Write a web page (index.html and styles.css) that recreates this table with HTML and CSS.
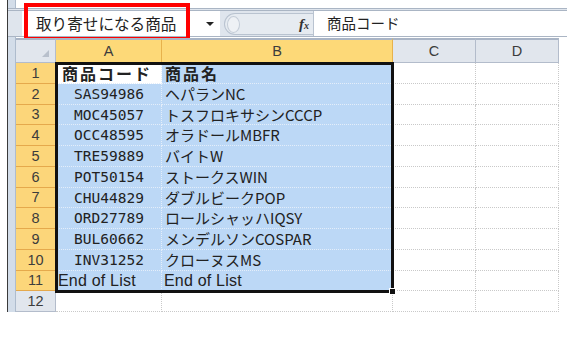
FILE: index.html
```html
<!DOCTYPE html>
<html lang="ja">
<head>
    <meta charset="UTF-8">
    <title>取り寄せになる商品</title>
    <link rel="stylesheet" href="styles.css">
</head>
<body>

    <div class="excel">
        <!-- 数式バー -->
        <div class="formula-bar">
            <div class="name-box">
                <span class="name-text">取り寄せになる商品</span>
                <span class="name-drop"></span>
            </div>
            <div class="fx-pill">
                <span class="pill-dot"></span>
                <span class="fx">f<small>x</small></span>
            </div>
            <div class="formula-input">商品コード</div>
        </div>

        <!-- 名前ボックスの強調枠 -->
        <div class="name-mark"></div>

        <!-- シート -->
        <div class="sheet">
            <div class="corner"></div>
            <div class="col-head on">A</div>
            <div class="col-head on">B</div>
            <div class="col-head">C</div>
            <div class="col-head">D</div>

            <div class="row-head on">1</div>
            <div class="cell active title">商品コード</div>
            <div class="cell sel title name">商品名</div>
            <div class="cell"></div><div class="cell"></div>

            <div class="row-head on">2</div>
            <div class="cell sel code">SAS94986</div>
            <div class="cell sel name">ヘパランNC</div>
            <div class="cell"></div><div class="cell"></div>

            <div class="row-head on">3</div>
            <div class="cell sel code">MOC45057</div>
            <div class="cell sel name">トスフロキサシンCCCP</div>
            <div class="cell"></div><div class="cell"></div>

            <div class="row-head on">4</div>
            <div class="cell sel code">OCC48595</div>
            <div class="cell sel name">オラドールMBFR</div>
            <div class="cell"></div><div class="cell"></div>

            <div class="row-head on">5</div>
            <div class="cell sel code">TRE59889</div>
            <div class="cell sel name">バイトW</div>
            <div class="cell"></div><div class="cell"></div>

            <div class="row-head on">6</div>
            <div class="cell sel code">POT50154</div>
            <div class="cell sel name">ストークスWIN</div>
            <div class="cell"></div><div class="cell"></div>

            <div class="row-head on">7</div>
            <div class="cell sel code">CHU44829</div>
            <div class="cell sel name">ダブルビークPOP</div>
            <div class="cell"></div><div class="cell"></div>

            <div class="row-head on">8</div>
            <div class="cell sel code">ORD27789</div>
            <div class="cell sel name">ロールシャッハIQSY</div>
            <div class="cell"></div><div class="cell"></div>

            <div class="row-head on">9</div>
            <div class="cell sel code">BUL60662</div>
            <div class="cell sel name">メンデルソンCOSPAR</div>
            <div class="cell"></div><div class="cell"></div>

            <div class="row-head on">10</div>
            <div class="cell sel code">INV31252</div>
            <div class="cell sel name">クローヌスMS</div>
            <div class="cell"></div><div class="cell"></div>

            <div class="row-head on">11</div>
            <div class="cell sel end">End of List</div>
            <div class="cell sel end">End of List</div>
            <div class="cell"></div><div class="cell"></div>

            <div class="row-head">12</div>
            <div class="cell"></div><div class="cell"></div>
            <div class="cell"></div><div class="cell"></div>

            <!-- 選択範囲 A1:B11 の太枠 -->
            <div class="sel-frame"></div>
        </div>
    </div>

</body>
</html>
```

FILE: styles.css
```css
body {
    margin: 0;
    background-color: #fff;
    font-family: "Noto Sans CJK JP", sans-serif;
    color: #222;
}
.excel {
    position: relative;
    width: 551px;
    margin-left: 7px;
    padding-left: 8px;
    border-left: 1px solid #3a3a3a;
    background: linear-gradient(to right, #d3dde9 0, #d3dde9 7px, #aebccd 7px, #aebccd 8px, transparent 8px);
    padding-top: 8px;
}

/* 数式バー */
.formula-bar {
    display: flex;
    height: 25px;
    border-top: 3px double #aab5c4;
    border-bottom: 1px solid #aab5c4;
    background-color: #dfe5ed;
    margin-left: -8px;
    padding-left: 14px;
}
.name-box {
    display: flex;
    align-items: center;
    width: 184px;
    background-color: #fff;
    padding-left: 14px;
}
.name-text {
    font-size: 15.6px;
    flex: 1;
    margin-top: -1px;
}
.name-drop {
    width: 0;
    height: 0;
    border-left: 4px solid transparent;
    border-right: 4px solid transparent;
    border-top: 4px solid #222;
    margin-right: 6px;
}
.fx-pill {
    display: flex;
    align-items: center;
    justify-content: space-between;
    width: 82px;
    margin: 2px 0 1px 4px;
    border: 1px solid #b9c3d0;
    border-right: none;
    border-radius: 12px 0 0 12px;
    background-color: #e6ebf1;
    padding: 0 4px 0 2px;
}
.pill-dot {
    width: 11px;
    height: 15px;
    border-radius: 50%;
    border: 1px solid #c4ccd7;
    background-color: #eef1f5;
}
.fx {
    font-family: "Liberation Serif", serif;
    font-style: italic;
    font-weight: bold;
    font-size: 15px;
    color: #333;
}
.fx small {
    font-size: 10px;
}
.formula-input {
    flex: 1;
    background-color: #fff;
    border-left: 1px solid #b9c3d0;
    font-size: 14.5px;
    padding-left: 13px;
    line-height: 24px;
}
.name-mark {
    position: absolute;
    left: 16px;
    top: 3px;
    width: 158px;
    height: 30px;
    border: 4px solid #f00;
}

/* シート */
.sheet {
    position: relative;
    display: grid;
    grid-template-columns: 40px 106px 231px 83px 83px;
    grid-template-rows: 25px repeat(12, 20.75px);
    margin-top: 1px;
}
.corner, .col-head, .row-head {
    display: flex;
    align-items: center;
    justify-content: center;
    font-family: "Liberation Sans", sans-serif;
    font-size: 14.5px;
    color: #3c3c3c;
    background-color: #e1e6ed;
    border-right: 1px solid #b3bccb;
    border-bottom: 1px solid #b3bccb;
}
.corner, .col-head {
    border-top: 2px solid #a9b4c5;
}
.corner {
    position: relative;
}
.corner::after {
    content: "";
    position: absolute;
    right: 6px;
    bottom: 5px;
    border-left: 7px solid transparent;
    border-bottom: 7px solid #b8c0cc;
}
.col-head.on {
    background-color: #fdd978;
    border-right-color: #e7b24c;
    border-bottom-color: #f1a93c;
}
.row-head.on {
    background-color: #fcd67a;
    border-right-color: #eba540;
    border-bottom-color: #e5a94c;
}
.cell {
    border-right: 1px dotted #c9c9c9;
    border-bottom: 1px dotted #c9c9c9;
    white-space: nowrap;
    line-height: 20px;
}
.cell.sel {
    background-color: #bcd8f6;
    border-color: #e4eefa;
}
.cell.active {
    background-color: #fff;
    border-color: #e4eefa;
}
.title {
    font-weight: bold;
    font-size: 16px;
    letter-spacing: 2px;
    padding-left: 6px;
}
.code {
    text-align: center;
    font-family: "DejaVu Sans Mono", monospace;
    font-size: 14.5px;
    padding-left: 1px;
}
.name {
    font-size: 15px;
    padding-left: 3px;
}
.title.name {
    font-size: 16px;
}
.end {
    font-family: "Liberation Sans", sans-serif;
    font-size: 16px;
    letter-spacing: 0.2px;
    padding-left: 2px;
}
/* 太枠は表の上に重ねる */
.sel-frame {
    position: absolute;
    left: 39px;
    top: 24px;
    width: 333px;
    height: 225px;
    border: 3px solid #111;
}
.sel-frame::after {
    content: "";
    position: absolute;
    right: -5px;
    bottom: -5px;
    width: 5px;
    height: 5px;
    background-color: #111;
    border: 1px solid #fff;
}
```
